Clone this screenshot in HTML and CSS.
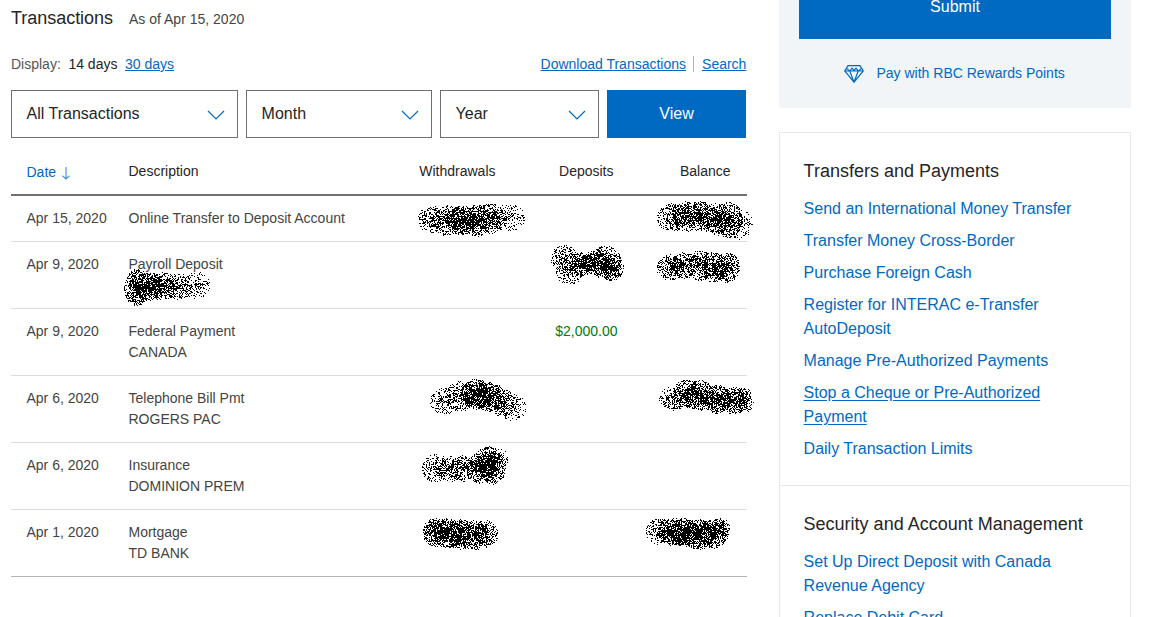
FILE: index.html
```html
<!DOCTYPE html>
<html lang="en">
<head>
<meta charset="utf-8">
<title>Transactions</title>
<link rel="stylesheet" href="styles.css">
</head>
<body>
<div class="page">
  <main class="main">
    <div class="heading"><h1>Transactions</h1><span>As of Apr 15, 2020</span></div>
    <div class="toolbar">
      <div class="display"><span class="label">Display:</span><span>14 days</span><a>30 days</a></div>
      <div class="actions"><a>Download Transactions</a><a class="search">Search</a></div>
    </div>
    <div class="filters">
      <div class="select">All Transactions<svg width="18" height="10" viewBox="0 0 18 10"><path d="M1 1l8 8 8-8"/></svg></div>
      <div class="select">Month<svg width="18" height="10" viewBox="0 0 18 10"><path d="M1 1l8 8 8-8"/></svg></div>
      <div class="select">Year<svg width="18" height="10" viewBox="0 0 18 10"><path d="M1 1l8 8 8-8"/></svg></div>
      <button class="view">View</button>
    </div>
    <div class="row head">
      <span class="sort">Date<svg width="8" height="13" viewBox="0 0 8 13"><path d="M4 0v12M0.5 8.7L4 12l3.500-3.300"/></svg></span><span>Description</span><span class="num">Withdrawals</span><span class="num">Deposits</span><span class="num">Balance</span>
    </div>
    <div class="row"><span>Apr 15, 2020</span><span>Online Transfer to Deposit Account</span></div>
    <div class="row tall"><span>Apr 9, 2020</span><span>Payroll Deposit</span></div>
    <div class="row tall"><span>Apr 9, 2020</span><span>Federal Payment<br>CANADA</span><span></span><span class="num credit">$2,000.00</span></div>
    <div class="row tall"><span>Apr 6, 2020</span><span>Telephone Bill Pmt<br>ROGERS PAC</span></div>
    <div class="row tall"><span>Apr 6, 2020</span><span>Insurance<br>DOMINION PREM</span></div>
    <div class="row tall last"><span>Apr 1, 2020</span><span>Mortgage<br>TD BANK</span></div>
  </main>
  <aside class="side">
    <div class="pay">
      <button class="submit">Submit</button>
      <a class="rewards"><svg width="20" height="18" viewBox="0 0 20 18"><path d="M4 .7h12L19.300 6 10 17.200.7 6zM.7 6h18.600M5.800 6L10 17.200 14.200 6M2.500 3.500L5.800 6 8 3.200 10 5.500 12 3.200 14.200 6 17.500 3.500"/></svg>Pay with RBC Rewards Points</a>
    </div>
    <div class="links">
      <section>
        <h2>Transfers and Payments</h2>
        <a>Send an International Money Transfer</a>
        <a>Transfer Money Cross-Border</a>
        <a>Purchase Foreign Cash</a>
        <a>Register for INTERAC e-Transfer<br>AutoDeposit</a>
        <a>Manage Pre-Authorized Payments</a>
        <a class="active">Stop a Cheque or Pre-Authorized<br>Payment</a>
        <a>Daily Transaction Limits</a>
      </section>
      <section>
        <h2>Security and Account Management</h2>
        <a>Set Up Direct Deposit with Canada<br>Revenue Agency</a>
        <a>Replace Debit Card</a>
      </section>
    </div>
  </aside>
  <svg class="spray" width="1150" height="617" shape-rendering="crispEdges"></svg>
</div>
<script src="spray.js"></script>
</body>
</html>
```
FILE: styles.css
```css
* { box-sizing: border-box; }
body { margin: 0; font-family: "Liberation Sans", Arial, sans-serif; font-size: 14px; line-height: 21px; color: #444; background: #fff; }
.page { position: relative; display: flex; gap: 32px; width: 1150px; height: 617px; padding-left: 11px; overflow: hidden; }
h1, h2 { margin: 0; font-weight: 400; font-size: 18px; color: #252525; }
a { color: #006ac3; }
.main { width: 736px; flex: none; }
.heading { display: flex; align-items: baseline; gap: 16px; height: 54px; padding-top: 8px; }
.heading h1 { letter-spacing: -.03px; }
.toolbar { display: flex; justify-content: space-between; height: 36px; }
.toolbar a { text-decoration: underline; text-underline-offset: 1px; }
.display { display: flex; gap: 7.600px; color: #252525; }
.label { color: #555; }
.actions { display: flex; gap: 7px; height: 21px; margin-right: .6px; }
.search { position: relative; padding-left: 9px; }
.search::before { content: ""; position: absolute; left: 0; top: 2px; height: 16px; width: 1px; background: #b5b5b5; }
.filters { display: grid; grid-template-columns: 227px 186px 159px 139px; gap: 8px; height: 48px; }
.select { display: flex; align-items: center; justify-content: space-between; border: 1px solid #6f6f6f; padding: 0 12px 2px 14.600px; font-size: 16px; color: #252525; }
.select svg { margin-top: 4px; }
svg path { fill: none; stroke: #006ac3; stroke-width: 1.2; }
button { border: 0; padding: 0; background: #006ac3; color: #fff; font: 16px/21px "Liberation Sans", Arial, sans-serif; }
.view { padding-bottom: 2px; }
.row { display: grid; grid-template-columns: 102px 250px 117px 118px 117px; height: 46px; padding: 12px 0 0 15.500px; border-bottom: 1px solid #dcdcdc; }
.row.tall { height: 67px; }
.row.last { border-bottom-color: #b3b3b3; }
.row.head { height: 58px; padding-top: 23px; border-bottom: 2px solid #6f6f6f; color: #252525; }
.num { text-align: right; }
.row .credit { margin-right: -4px; color: #007a12; }
.sort { display: flex; gap: 6px; color: #006ac3; padding-top: 1px; }
.sort svg { margin-top: 5px; opacity: .7; }
.side { width: 352px; flex: none; }
.pay { height: 108px; padding: 0 20px; background: #f2f5f7; }
.submit { display: block; width: 100%; height: 39px; padding-bottom: 26px; line-height: 13px; }
.rewards { display: flex; align-items: center; gap: 12.500px; margin: 24px 0 0 45px; }
.links { margin-top: 24px; height: 600px; border: 1px solid #e5e8e9; }
.links section { padding: 25px 23.600px 0; height: 353px; border-bottom: 1px solid #e5e8e9; }
.links h2 { line-height: 27px; margin-bottom: 12px; }
.links a { display: block; margin-bottom: 8px; font-size: 16px; line-height: 24px; }
.links .active { text-decoration: underline; text-underline-offset: 2px; }
.spray { position: absolute; left: 0; top: 0; pointer-events: none; }
.spray path { fill: #000; stroke: none; }
```
FILE: spray.js
```javascript
// Airbrushed redaction marks: each entry is [centre x, centre y, radius x, radius y, dots].
const marks = [
  [432,219,14,13,220],[447,220,15,15,350],[462,220,15,15,550],[476,220,15,16,480],[491,218,15,15,400],[508,217,17,14,200],
  [672,217,15,14,340],[686,216,14,15,330],[701,216,15,15,430],[716,219,15,16,440],[728,220,15,18,450],[740,224,13,15,170],
  [565,258,14,13,240],[569,272,13,13,180],[582,264,13,12,330],[595,262,14,12,390],[606,262,15,17,410],[612,267,12,13,340],
  [671,267,14,13,300],[684,265,14,13,280],[700,265,14,15,330],[714,267,14,15,400],[727,267,13,15,380],
  [137,287,13,18,550],[149,286,14,14,450],[163,286,14,14,400],[178,286,15,13,260],[197,285,14,13,150],
  [444,401,14,13,180],[460,396,14,15,280],[476,394,15,15,680],[490,397,15,15,480],[501,402,14,14,240],[513,407,13,13,150],
  [673,398,14,12,200],[687,393,14,14,350],[700,395,15,15,550],[717,399,15,14,470],[733,400,15,13,400],[743,400,11,13,220],
  [435,468,13,14,210],[449,468,14,13,240],[463,468,13,13,240],[480,468,14,15,410],[488,462,14,16,430],[493,467,13,17,340],[498,459,10,12,90],
  [436,532,13,14,420],[448,533,14,15,520],[461,534,14,15,500],[475,535,14,15,400],[486,533,12,14,250],
  [659,531,13,13,210],[672,531,14,14,440],[685,532,15,14,600],[699,534,15,15,590],[714,533,14,15,420],[720,528,10,11,160]
];
let seed = 7321;
const random = () => {
  seed = (seed + 0x6D2B79F5) | 0;
  let t = Math.imul(seed ^ (seed >>> 15), 1 | seed);
  t = (t + Math.imul(t ^ (t >>> 7), 61 | t)) ^ t;
  return ((t ^ (t >>> 14)) >>> 0) / 4294967296;
};
const dots = new Set();
for (const [x, y, rx, ry, n] of marks) {
  for (let i = 0; i < n; i++) {
    const angle = random() * Math.PI * 2, r = Math.pow(random(), 0.66);
    dots.add(`M${Math.round(x - 0.5 + Math.cos(angle) * r * rx)} ${Math.round(y + Math.sin(angle) * r * ry)}h1v1h-1z`);
  }
}
const path = document.createElementNS("http://www.w3.org/2000/svg", "path");
path.setAttribute("d", [...dots].join(""));
document.querySelector(".spray").append(path);
```
